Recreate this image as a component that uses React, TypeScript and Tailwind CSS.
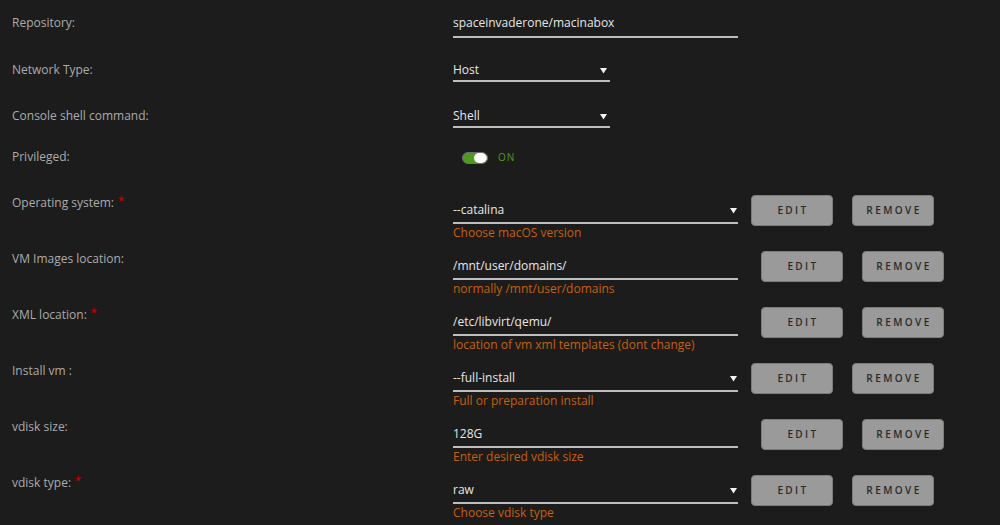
import React from 'react';

type Field = {
  label: string;
  required?: boolean;
  value: string;
  kind: 'text' | 'select';
  hint: string;
};

const fields: Field[] = [
  { label: 'Operating system:', required: true, value: '--catalina', kind: 'select', hint: 'Choose macOS version' },
  { label: 'VM Images location:', value: '/mnt/user/domains/', kind: 'text', hint: 'normally /mnt/user/domains' },
  { label: 'XML location:', required: true, value: '/etc/libvirt/qemu/', kind: 'text', hint: 'location of vm xml templates (dont change)' },
  { label: 'Install vm :', value: '--full-install', kind: 'select', hint: 'Full or preparation install' },
  { label: 'vdisk size:', value: '128G', kind: 'text', hint: 'Enter desired vdisk size' },
  { label: 'vdisk type:', required: true, value: 'raw', kind: 'select', hint: 'Choose vdisk type' },
];

const Arrow = () => (
  <svg width="7" height="7" viewBox="0 0 7 7" className="shrink-0">
    <path d="M0 1h7L3.5 6.5z" fill="#f2f2f2" />
  </svg>
);

const Label = ({ text, required }: { text: string; required?: boolean }) => (
  <div className="w-[441px] shrink-0 text-[12px] leading-[18px] text-[#ababab]">
    {text}
    {required && <span className="ml-[4px] relative -top-[3px] text-[11px] text-[#d40000]">*</span>}
  </div>
);

const Button = ({ children, first }: { children: React.ReactNode; first?: boolean }) => (
  <button
    className={`${first ? '' : 'ml-[19px]'} mt-[1px] h-[31px] w-[82px] shrink-0 rounded-[4px] border border-[#7c7c7c] bg-[#9a9a9a] pl-[2px] text-[10px] font-semibold tracking-[2.4px] text-[#2b2b2b]`}
  >
    {children}
  </button>
);

export default function App() {
  return (
    <div
      className="h-[525px] w-[1000px] overflow-hidden bg-[#1c1c1c] pl-3"
      style={{ fontFamily: '"Open Sans", "DejaVu Sans", sans-serif' }}
    >
      {/* top rows */}
      <div className="flex h-[47px] pt-[14px]">
        <Label text="Repository:" />
        <div className="h-[24px] w-[285px] border-b-2 border-[#bdbdbd] text-[12px] leading-[18px] text-[#e6e6e6]">
          spaceinvaderone/macinabox
        </div>
      </div>
      {['Host', 'Shell'].map((v, i) => (
        <div key={v} className="flex h-[46px] pt-[14px]">
          <Label text={i === 0 ? 'Network Type:' : 'Console shell command:'} />
          <div className="flex h-[21px] w-[157px] items-start justify-between border-b-2 border-[#bdbdbd] pr-[3px] text-[12px] leading-[18px] text-[#e6e6e6]">
            <span>{v}</span>
            <span className="pt-[6px]">
              <Arrow />
            </span>
          </div>
        </div>
      ))}
      <div className="flex h-[55px] items-start pt-[9px]">
        <Label text="Privileged:" />
        <div className="flex h-[18px] items-center pl-[9px] pt-[1px]">
          <div className="flex h-[12px] w-[26px] overflow-hidden rounded-full border border-[#6e6e6e] bg-[#4f9a1e]">
            <div className="ml-auto h-full w-[13px] rounded-full bg-white" />
          </div>
          <span className="ml-[10px] text-[10px] tracking-[1px] text-[#4f9a1e]">ON</span>
        </div>
      </div>

      {fields.map((f) => (
        <div key={f.label} className="flex h-[56px]">
          <Label text={f.label} required={f.required} />
          <div className="w-[285px] shrink-0">
            <div className="flex items-start justify-between border-b-2 border-[#bdbdbd] pb-[3px] pt-[7px] text-[12px] leading-[18px] text-[#e6e6e6]">
              <span>{f.value}</span>
              {f.kind === 'select' && (
                <span className="pr-[1px] pt-[6px]">
                  <Arrow />
                </span>
              )}
            </div>
            <div className="mt-[1px] text-[12px] leading-[16px] text-[#c5600f]">{f.hint}</div>
          </div>
          <div className={`flex ${f.kind === 'select' ? 'ml-[13px]' : 'ml-[23px]'}`}>
            <Button first>EDIT</Button>
            <Button>REMOVE</Button>
          </div>
        </div>
      ))}
    </div>
  );
}
